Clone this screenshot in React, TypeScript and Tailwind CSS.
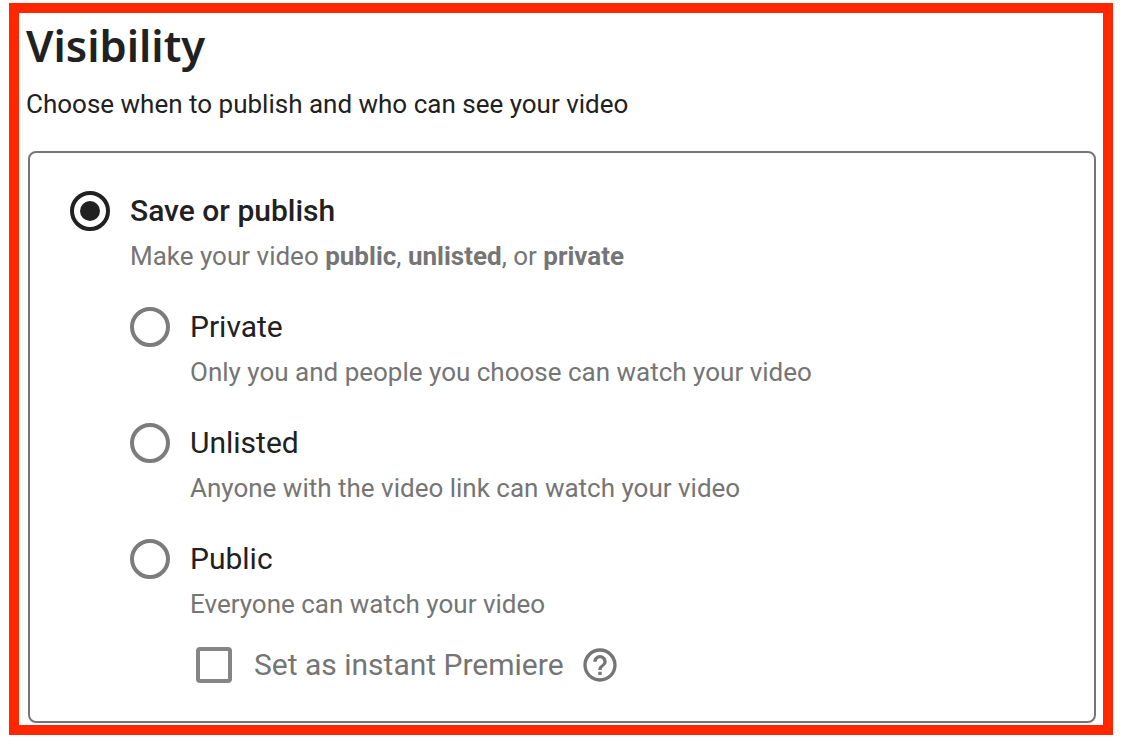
function Radio({ checked }: { checked?: boolean }) {
  if (checked) {
    return (
      <span className="flex h-10 w-10 shrink-0 items-center justify-center rounded-full border-4 border-[#212121]">
        <span className="h-5 w-5 rounded-full bg-[#212121]" />
      </span>
    )
  }
  return <span className="h-10 w-10 shrink-0 rounded-full border-4 border-[#7c7c7c]" />
}

function Option({ title, desc }: { title: string; desc: string }) {
  return (
    <div className="flex h-[116px] gap-5 pl-[100px]">
      <Radio />
      <div className="pt-[2px]">
        <div className="text-[30px] leading-9 text-[#212121]">{title}</div>
        <div className="mt-[11px] text-[26px] leading-8 text-[#757575]">{desc}</div>
      </div>
    </div>
  )
}

export default function App() {
  return (
    <div className="h-[747px] w-[1123px] bg-white pl-[9px] pt-[3px] font-['Roboto',sans-serif]">
      <div className="h-[732px] w-[1104px] border-[10px] border-[#ff2600] bg-white pl-[7px] pr-[8px]">
        <h1 className="pt-[4px] font-['Noto_Sans',sans-serif] text-[43.5px] leading-[56px] font-semibold text-[#212121]">
          Visibility
        </h1>
        <p className="mt-[15px] text-[26px] leading-8 text-[#212121]">
          Choose when to publish and who can see your video
        </p>
        <div className="mt-[31px] ml-[2px] h-[572px] w-[1068px] rounded-lg border-2 border-[#757575] pt-[38px]">
          <div className="flex h-[116px] gap-5 pl-[40px]">
            <Radio checked />
            <div className="pt-[2px]">
              <div className="text-[30px] leading-9 font-medium text-[#212121]">Save or publish</div>
              <div className="mt-[11px] text-[26px] leading-8 text-[#757575]">
                Make your video <b className="font-bold">public</b>, <b className="font-bold">unlisted</b>, or{' '}
                <b className="font-bold">private</b>
              </div>
            </div>
          </div>
          <Option title="Private" desc="Only you and people you choose can watch your video" />
          <Option title="Unlisted" desc="Anyone with the video link can watch your video" />
          <div className="h-[88px]">
            <Option title="Public" desc="Everyone can watch your video" />
          </div>
          <div className="mt-[18px] flex items-center pl-[166px]">
            <span className="h-9 w-9 shrink-0 rounded-[4px] border-4 border-[#858585]" />
            <span className="ml-[22px] text-[30px] leading-9 text-[#757575]">Set as instant Premiere</span>
            <svg className="ml-[16px] h-10 w-10" viewBox="0 0 24 24" fill="#757575">
              <path d="M12 2C6.48 2 2 6.48 2 12s4.48 10 10 10 10-4.48 10-10S17.52 2 12 2zm0 18c-4.41 0-8-3.59-8-8s3.59-8 8-8 8 3.59 8 8-3.59 8-8 8z" />
              <path d="M11 16h2v2h-2zM12 6c-2.21 0-4 1.79-4 4h2c0-1.1.9-2 2-2s2 .9 2 2c0 2-3 1.75-3 5h2c0-2.25 3-2.5 3-5 0-2.21-1.79-4-4-4z" />
            </svg>
          </div>
        </div>
      </div>
    </div>
  )
}
